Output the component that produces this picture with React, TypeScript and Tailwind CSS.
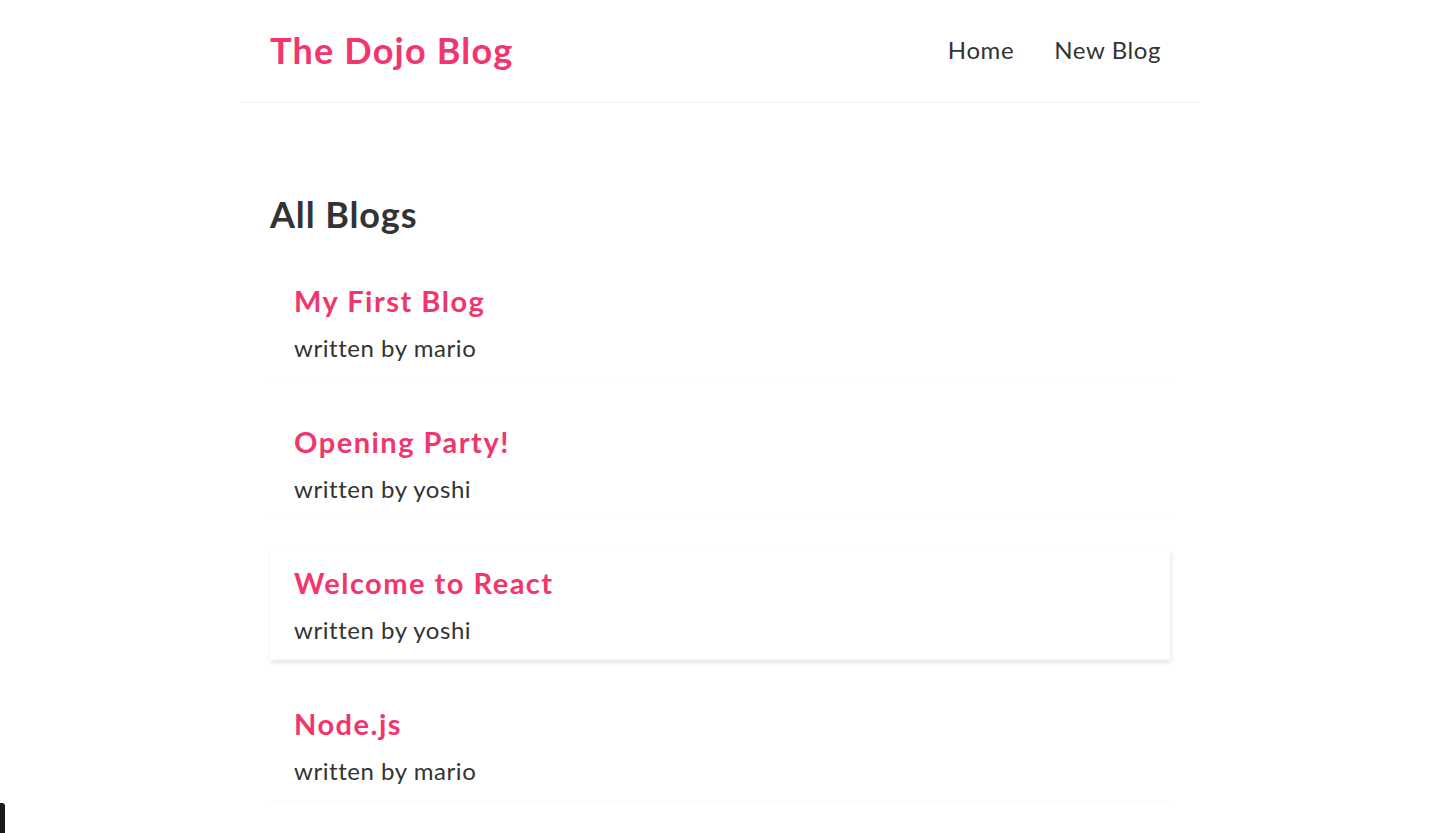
import React from "react";

const blogs = [
  { title: "My First Blog", author: "mario", hover: false },
  { title: "Opening Party!", author: "yoshi", hover: false },
  { title: "Welcome to React", author: "yoshi", hover: true },
  { title: "Node.js", author: "mario", hover: false },
];

export default function App() {
  return (
    <div className="relative min-h-[833px] bg-white text-[#333] overflow-hidden" style={{ fontFamily: "Lato, 'Noto Sans', sans-serif" }}>
      <nav className="mx-auto flex h-[103px] w-[960px] items-center border-b border-[#f2f2f2] px-[30px] pb-[2px]">
        <h1 className="text-[36px] font-bold leading-[45px] tracking-[1.2px] text-[#f1356d]">The Dojo Blog</h1>
        <div className="ml-auto flex">
          <a className="ml-[22px] p-[9px] text-[24px] leading-[30px] tracking-[0.6px] text-[#333]">Home</a>
          <a className="ml-[22px] p-[9px] text-[24px] leading-[30px] tracking-[0.6px] text-[#333]">New Blog</a>
        </div>
      </nav>
      <div className="mx-auto mt-[59px] w-[960px] px-[30px] pt-[30px]">
        <h2 className="text-[36px] font-bold leading-[45px] tracking-[0.9px] text-[#333]">All Blogs</h2>
        <div className="flex flex-col gap-[30px] pt-[30px]">
          {blogs.map((b) => (
            <div
              key={b.title}
              className={
                b.hover
                  ? "border-b border-[#fafafa] px-[24px] pb-[13px] pt-[16px] shadow-[1px_3px_5px_rgba(0,0,0,0.1)]"
                  : "border-b border-[#fafafa] px-[24px] pb-[13px] pt-[16px]"
              }
            >
              <h2 className="mb-[13px] text-[29px] font-bold leading-[36px] tracking-[1.5px] text-[#f1356d]">{b.title}</h2>
              <p className="text-[24px] leading-[32px] tracking-[0.55px] text-[#333]">written by {b.author}</p>
            </div>
          ))}
        </div>
      </div>
      <div className="absolute left-0 top-[803px] h-[30px] w-[5px] rounded-tr-[3px] bg-[#1a1a1a]" />
    </div>
  );
}
